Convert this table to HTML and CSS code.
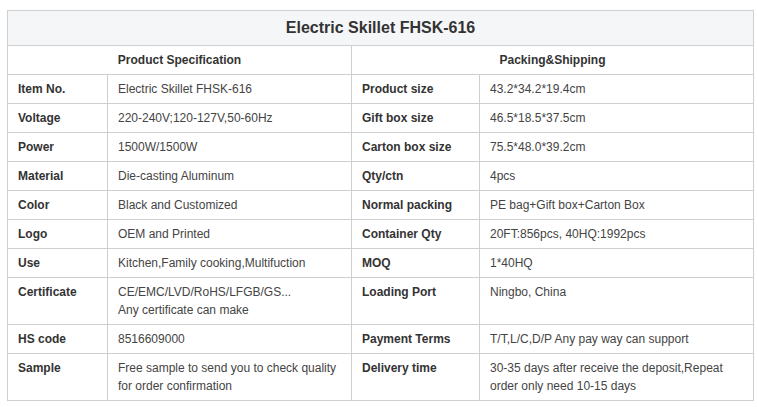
FILE: index.html
```html
<!DOCTYPE html>
<html>
<head>
<meta charset="utf-8">
<link rel="stylesheet" href="styles.css">
</head>
<body>
<div class="wrap">
<table class="spec">
<colgroup>
<col class="c1"><col class="c2"><col class="c3"><col class="c4">
</colgroup>
<tr><th class="title" colspan="4">Electric Skillet FHSK-616</th></tr>
<tr><th class="head" colspan="2">Product Specification</th><th class="head" colspan="2">Packing&amp;Shipping</th></tr>
<tr><td class="lbl">Item No.</td><td>Electric Skillet FHSK-616</td><td class="lbl">Product size</td><td>43.2*34.2*19.4cm</td></tr>
<tr><td class="lbl">Voltage</td><td>220-240V;120-127V,50-60Hz</td><td class="lbl">Gift box size</td><td>46.5*18.5*37.5cm</td></tr>
<tr><td class="lbl">Power</td><td>1500W/1500W</td><td class="lbl">Carton box size</td><td>75.5*48.0*39.2cm</td></tr>
<tr><td class="lbl">Material</td><td>Die-casting Aluminum</td><td class="lbl">Qty/ctn</td><td>4pcs</td></tr>
<tr><td class="lbl">Color</td><td>Black and Customized</td><td class="lbl">Normal packing</td><td>PE bag+Gift box+Carton Box</td></tr>
<tr><td class="lbl">Logo</td><td>OEM and Printed</td><td class="lbl">Container Qty</td><td>20FT:856pcs, 40HQ:1992pcs</td></tr>
<tr><td class="lbl">Use</td><td>Kitchen,Family cooking,Multifuction</td><td class="lbl">MOQ</td><td>1*40HQ</td></tr>
<tr><td class="lbl">Certificate</td><td>CE/EMC/LVD/RoHS/LFGB/GS...<br>Any certificate can make</td><td class="lbl">Loading Port</td><td>Ningbo, China</td></tr>
<tr><td class="lbl">HS code</td><td>8516609000</td><td class="lbl">Payment Terms</td><td>T/T,L/C,D/P Any pay way can support</td></tr>
<tr><td class="lbl">Sample</td><td>Free sample to send you to check quality for order confirmation</td><td class="lbl">Delivery time</td><td>30-35 days after receive the deposit,Repeat order only need 10-15 days</td></tr>
</table>
</div>
</body>
</html>
```
FILE: styles.css
```css
html, body {
  margin: 0;
  padding: 0;
  background: #fff;
}
.wrap {
  padding: 10px 0 0 7px;
}
.spec {
  border-collapse: collapse;
  table-layout: fixed;
  width: 746px;
  font-family: "Liberation Sans", Arial, sans-serif;
  font-size: 12px;
  line-height: 18px;
  color: #444;
}
.c1 { width: 100px; }
.c2 { width: 244px; }
.c3 { width: 128px; }
.c4 { width: 274px; }
.spec td, .spec th {
  border: 1px solid #cfcfcf;
  padding: 5px 10px;
  text-align: left;
  vertical-align: top;
}
.spec .title {
  background: #f5f6f8;
  font-size: 16px;
  line-height: 24px;
  font-weight: bold;
  color: #333;
  text-align: center;
}
.spec .head {
  font-weight: bold;
  color: #333;
  text-align: center;
}
.spec .lbl {
  font-weight: bold;
  color: #333;
}
```
